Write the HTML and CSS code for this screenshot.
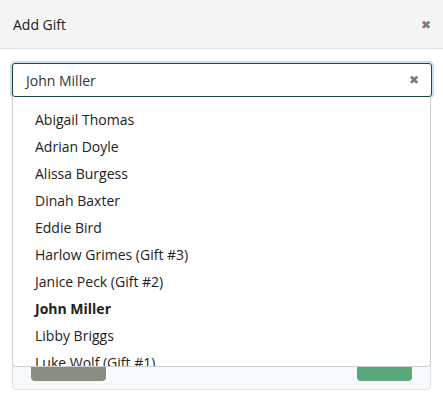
FILE: index.html
```html
<!DOCTYPE html>
<html lang="en">
<head>
    <meta charset="UTF-8">
    <meta name="viewport" content="width=device-width, initial-scale=1.0">
    <title>Add Gift</title>
    <link rel="stylesheet" href="styles.css">
</head>
<body>
    <div class="modal">
        <div class="modal-header">
            <h1>Add Gift</h1>
            <span class="close">&#10006;</span>
        </div>
        <div class="modal-body">
            <div class="picker">
                <div class="picker-input">
                    <span>John Miller</span>
                    <span class="clear">&#10006;</span>
                </div>
                <ul class="picker-menu">
                    <li>Abigail Thomas</li>
                    <li>Adrian Doyle</li>
                    <li>Alissa Burgess</li>
                    <li>Dinah Baxter</li>
                    <li>Eddie Bird</li>
                    <li>Harlow Grimes (Gift #3)</li>
                    <li>Janice Peck (Gift #2)</li>
                    <li class="selected">John Miller</li>
                    <li>Libby Briggs</li>
                    <li>Luke Wolf (Gift #1)</li>
                    <li>Mara Keller</li>
                </ul>
            </div>
            <div class="gift-panel">
                <div class="actions">
                    <button class="btn-cancel">Cancel</button>
                    <button class="btn-save">Save</button>
                </div>
            </div>
        </div>
    </div>
</body>
</html>
```

FILE: styles.css
```css
* { box-sizing: border-box; margin: 0; padding: 0; }
body { font-family: "Open Sans", Arial, sans-serif; background-color: #ffffff; color: #212529; }
.modal-header {
    height: 49px; padding: 0 12px 0 13px; display: flex; align-items: center; justify-content: space-between;
    background-color: #f5f5f5; border-bottom: 1px solid #dde2e8;
}
.modal-header h1 { font-size: 14px; font-weight: 400; color: #222222; }
.close { font-size: 12px; color: #7a7a7a; }
.modal-body { padding: 14px 11px 0 12px; }
.picker { position: relative; }
.picker-input {
    height: 34px; display: flex; align-items: center; justify-content: space-between; padding: 0 12px 0 13px;
    border: 1px solid #1d4a35; border-radius: 3px; box-shadow: 0 0 0 2px #c4e1f3; font-size: 14px; color: #333333;
}
.clear { font-size: 12px; color: #7a7a7a; margin-top: -2px; }
.picker-menu {
    position: absolute; top: 100%; left: 0; right: 1px; height: 270px; overflow: hidden; list-style: none;
    background-color: #ffffff; border: 1px solid #cfcfcf; border-top: none; border-radius: 0 0 4px 4px;
    padding-top: 9px; z-index: 2;
}
.picker-menu li { height: 27px; line-height: 27px; padding-left: 22px; font-size: 14px; color: #222222; }
.picker-menu li.selected { font-weight: 700; }
.gift-panel {
    margin-top: 77px; height: 216px; display: flex; align-items: flex-end; padding: 0 18px 8px 18px;
    background-color: #f8f9fa; border: 1px solid #dde1e6; border-radius: 4px; margin-right: 1px;
}
.actions { flex: 1; display: flex; justify-content: space-between; }
.actions button { height: 44px; border: none; border-radius: 4px; color: #ffffff; font-size: 14px; }
.btn-cancel { width: 75px; background-color: #898e84; }
.btn-save { width: 55px; background-color: #5aa77a; }
```
